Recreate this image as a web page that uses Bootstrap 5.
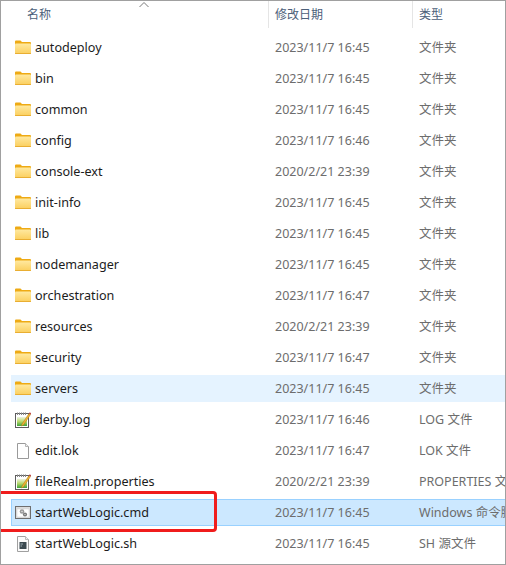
<!DOCTYPE html>
<html lang="zh-CN"><head><meta charset="utf-8"><title>Explorer</title>
<link href="https://cdn.jsdelivr.net/npm/bootstrap@5.3.0/dist/css/bootstrap.min.css" rel="stylesheet">
<style>
html,body{height:565px;overflow:hidden;background:#fff}
body{font-family:"Noto Sans","Noto Sans CJK SC",sans-serif;font-size:12.6px;line-height:1}
.frame{width:506px;height:565px;border:1px solid #a0a0a0;overflow:hidden;position:relative}
.head{height:27px;color:#4c607a;font-size:12px}
.hname{width:267px;flex:none;padding-left:26px;position:relative}
.hdate{width:144px;flex:none;padding-left:6px;border-left:1px solid #e5e5e5}
.htype{flex:1;padding-left:6px;border-left:1px solid #e5e5e5}
.caret-up{position:absolute;left:137px;top:0}
.rows{padding-top:6px;gap:4px;padding-left:10px}
.rowitem{height:27px;white-space:nowrap;overflow:hidden;border:1px solid transparent;border-right:0}
.rowitem.hov{background:#e5f3ff}
.rowitem.sel{background:#cce8ff;border-color:#99d1ff}
.cname{width:254px;flex:none;color:#1c1c1c;gap:4px;padding-left:3px;padding-top:2px}
.cname .ico{margin-top:-2px}
.cdate{width:144px;flex:none;padding-left:9px;padding-top:2px;color:#6d6d6d;font-size:12.5px}
.ctype{flex:none;padding-left:9px;padding-top:2px;color:#6d6d6d;font-size:12.5px}
.ico{width:16px;height:16px;flex:none}
.redbox{position:absolute;left:-5px;top:490px;width:221px;height:41px;border:3px solid #f01c1c;border-radius:4px;pointer-events:none}
</style></head><body>
<svg width="0" height="0" class="position-absolute">
<defs>
<linearGradient id="fg" x1="0" y1="0" x2="0" y2="1"><stop offset="0" stop-color="#ffe9a0"/><stop offset="1" stop-color="#fbcf5e"/></linearGradient>
<linearGradient id="gg" x1="0" y1="0" x2="0" y2="1"><stop offset="0" stop-color="#eef3e0"/><stop offset=".5" stop-color="#b6d96b"/><stop offset="1" stop-color="#3fa23a"/></linearGradient>
<symbol id="folder" viewBox="0 1 16 16"><path d="M0 2.500Q0 1.500 1 1.500H5.500L7 3H15Q16 3 16 4V14Q16 15 15 15H1Q0 15 0 14Z" fill="#eeaa14"/><path d="M0 5.500Q0 4.500 1 4.500H15Q16 4.500 16 5.500V14Q16 14.800 15 14.800H1Q0 14.800 0 14Z" fill="url(#fg)"/><path d="M0 14.200H16V14.500Q16 15 15 15H1Q0 15 0 14.500Z" fill="#e3a62a"/></symbol>
<symbol id="note" viewBox="0 0 16 16"><rect x=".5" y="1.500" width="13" height="14" fill="#fff" stroke="#5c5c5c"/><path d="M2.500 .5V3M4.500 .5V3M6.500 .5V3M8.500 .5V3M10.500 .5V3" stroke="#888"/><rect x="2" y="5" width="10" height="9" fill="url(#gg)"/><path d="M7 12L14 1.500L15.500 2.500L8.500 13L6.500 14Z" fill="#f2b632" stroke="#a8741c" stroke-width=".5"/><path d="M14 1.500L14.800 .3L16 1.200L15.500 2.500Z" fill="#b3262a"/></symbol>
<symbol id="blank" viewBox="0 0 16 16"><path d="M2.500 .5H10.500L13.500 3.500V15.500H2.500Z" fill="#fff" stroke="#9a9a9a"/><path d="M10.500 .5V3.500H13.500" fill="#f0f0f0" stroke="#b5b5b5"/></symbol>
<symbol id="cmd" viewBox="0 0 16 16"><rect x=".5" y="1.500" width="15" height="12" fill="#dcdcdc" stroke="#6e6e6e"/><rect x="2" y="4" width="12" height="8" fill="#fff" stroke="#cfcfcf" stroke-width=".5"/><circle cx="7" cy="6.500" r="2.300" fill="#9a9a9a"/><circle cx="10" cy="9.500" r="2.100" fill="#7c7c7c"/><circle cx="7" cy="6.500" r=".7" fill="#eee"/><circle cx="10" cy="9.500" r=".6" fill="#eee"/></symbol>
<symbol id="script" viewBox="0 0 16 16"><path d="M2.500 .5H10.500L13.500 3.500V15.500H2.500Z" fill="#fbfbfb" stroke="#a0a0a0"/><path d="M10.500 .5V3.500H13.500" fill="#eee" stroke="#bbb"/><rect x="4.500" y="6" width="7" height="7" fill="#3c4a50"/><path d="M5.500 8H8M5.500 10H7" stroke="#9fb0b6"/></symbol>
</defs></svg>
<div class="frame">
<div class="head d-flex align-items-center">
<div class="hname h-100 d-flex align-items-center">名称<svg class="caret-up" width="12" height="7" viewBox="0 0 12 7"><path d="M1.500 6L6 1.500L10.500 6" fill="none" stroke="#7a7a7a" stroke-width="1"/></svg></div>
<div class="hdate h-100 d-flex align-items-center">修改日期</div>
<div class="htype h-100 d-flex align-items-center">类型</div>
</div>
<div class="rows d-flex flex-column">
<div class="rowitem d-flex align-items-center"><div class="cname d-flex align-items-center"><svg class="ico"><use href="#folder"/></svg>autodeploy</div><div class="cdate">2023/11/7 16:45</div><div class="ctype">文件夹</div></div>
<div class="rowitem d-flex align-items-center"><div class="cname d-flex align-items-center"><svg class="ico"><use href="#folder"/></svg>bin</div><div class="cdate">2023/11/7 16:45</div><div class="ctype">文件夹</div></div>
<div class="rowitem d-flex align-items-center"><div class="cname d-flex align-items-center"><svg class="ico"><use href="#folder"/></svg>common</div><div class="cdate">2023/11/7 16:45</div><div class="ctype">文件夹</div></div>
<div class="rowitem d-flex align-items-center"><div class="cname d-flex align-items-center"><svg class="ico"><use href="#folder"/></svg>config</div><div class="cdate">2023/11/7 16:46</div><div class="ctype">文件夹</div></div>
<div class="rowitem d-flex align-items-center"><div class="cname d-flex align-items-center"><svg class="ico"><use href="#folder"/></svg>console-ext</div><div class="cdate">2020/2/21 23:39</div><div class="ctype">文件夹</div></div>
<div class="rowitem d-flex align-items-center"><div class="cname d-flex align-items-center"><svg class="ico"><use href="#folder"/></svg>init-info</div><div class="cdate">2023/11/7 16:45</div><div class="ctype">文件夹</div></div>
<div class="rowitem d-flex align-items-center"><div class="cname d-flex align-items-center"><svg class="ico"><use href="#folder"/></svg>lib</div><div class="cdate">2023/11/7 16:45</div><div class="ctype">文件夹</div></div>
<div class="rowitem d-flex align-items-center"><div class="cname d-flex align-items-center"><svg class="ico"><use href="#folder"/></svg>nodemanager</div><div class="cdate">2023/11/7 16:45</div><div class="ctype">文件夹</div></div>
<div class="rowitem d-flex align-items-center"><div class="cname d-flex align-items-center"><svg class="ico"><use href="#folder"/></svg>orchestration</div><div class="cdate">2023/11/7 16:47</div><div class="ctype">文件夹</div></div>
<div class="rowitem d-flex align-items-center"><div class="cname d-flex align-items-center"><svg class="ico"><use href="#folder"/></svg>resources</div><div class="cdate">2020/2/21 23:39</div><div class="ctype">文件夹</div></div>
<div class="rowitem d-flex align-items-center"><div class="cname d-flex align-items-center"><svg class="ico"><use href="#folder"/></svg>security</div><div class="cdate">2023/11/7 16:47</div><div class="ctype">文件夹</div></div>
<div class="rowitem hov d-flex align-items-center"><div class="cname d-flex align-items-center"><svg class="ico"><use href="#folder"/></svg>servers</div><div class="cdate">2023/11/7 16:45</div><div class="ctype">文件夹</div></div>
<div class="rowitem d-flex align-items-center"><div class="cname d-flex align-items-center"><svg class="ico"><use href="#note"/></svg>derby.log</div><div class="cdate">2023/11/7 16:46</div><div class="ctype">LOG 文件</div></div>
<div class="rowitem d-flex align-items-center"><div class="cname d-flex align-items-center"><svg class="ico"><use href="#blank"/></svg>edit.lok</div><div class="cdate">2023/11/7 16:47</div><div class="ctype">LOK 文件</div></div>
<div class="rowitem d-flex align-items-center"><div class="cname d-flex align-items-center"><svg class="ico"><use href="#note"/></svg>fileRealm.properties</div><div class="cdate">2020/2/21 23:39</div><div class="ctype">PROPERTIES 文件</div></div>
<div class="rowitem sel d-flex align-items-center"><div class="cname d-flex align-items-center"><svg class="ico"><use href="#cmd"/></svg>startWebLogic.cmd</div><div class="cdate">2023/11/7 16:45</div><div class="ctype">Windows 命令脚本</div></div>
<div class="rowitem d-flex align-items-center"><div class="cname d-flex align-items-center"><svg class="ico"><use href="#script"/></svg>startWebLogic.sh</div><div class="cdate">2023/11/7 16:45</div><div class="ctype">SH 源文件</div></div>
</div>
<div class="redbox"></div>
</div>
<script src="https://cdn.jsdelivr.net/npm/bootstrap@5.3.0/dist/js/bootstrap.bundle.min.js"></script>
</body></html>
